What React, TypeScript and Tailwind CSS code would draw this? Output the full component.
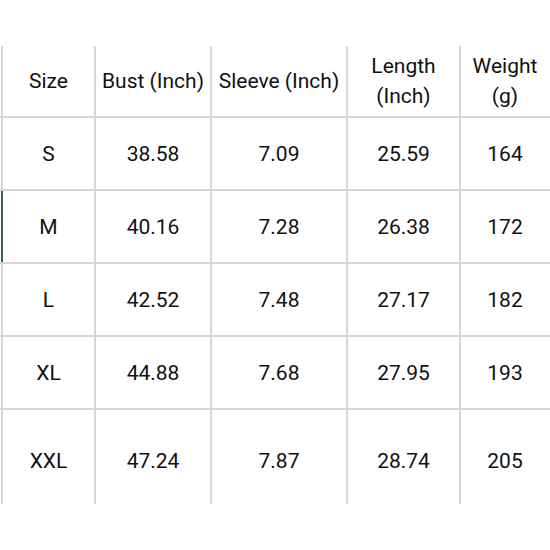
import React from 'react';

const rows = [
  { size: 'S', bust: '38.58', sleeve: '7.09', length: '25.59', weight: '164', h: 'h-[73px]' },
  { size: 'M', bust: '40.16', sleeve: '7.28', length: '26.38', weight: '172', h: 'h-[73px]', selected: true },
  { size: 'L', bust: '42.52', sleeve: '7.48', length: '27.17', weight: '182', h: 'h-[73px]' },
  { size: 'XL', bust: '44.88', sleeve: '7.68', length: '27.95', weight: '193', h: 'h-[73px]' },
  { size: 'XXL', bust: '47.24', sleeve: '7.87', length: '28.74', weight: '205', h: 'h-[96px]', pad: true },
];

const widths = ['w-[93px]', 'w-[116px]', 'w-[136px]', 'w-[113px]', 'w-[96px]'];

const Cell: React.FC<{ i: number; children: React.ReactNode; green?: boolean; pad?: 'head' | 'row' | 'big' }> = ({
  i,
  children,
  green,
  pad = 'head',
}) => (
  <div
    className={`${widths[i]} shrink-0 flex items-center justify-center text-center border-l-2 ${
      green && i === 0 ? 'border-l-[#2e6b45]' : 'border-l-[#d6d6d6]'
    }`}
  >
    <span
      className={`${i === 4 ? '-ml-[6px]' : ''} ${pad === 'big' ? 'pt-[10px]' : pad === 'row' ? 'pt-[3px]' : ''}`}
    >
      {children}
    </span>
  </div>
);

export default function App() {
  return (
    <div
      className="w-[550px] h-[550px] bg-white overflow-hidden text-[#111] text-[21px]"
      style={{ fontFamily: 'Roboto, "Noto Sans", sans-serif' }}
    >
      <div className="pt-[46px]">
        <div className="flex h-[70px] pl-[1px] leading-[30px]">
          <Cell i={0}>Size</Cell>
          <Cell i={1}>Bust (Inch)</Cell>
          <Cell i={2}>Sleeve (Inch)</Cell>
          <Cell i={3}>
            Length
            <br />
            (Inch)
          </Cell>
          <Cell i={4}>
            Weight
            <br />
            (g)
          </Cell>
        </div>
        {rows.map((r) => {
          const pad = r.pad ? 'big' : 'row';
          return (
            <div key={r.size} className={`flex ${r.h} w-[600px] pl-[1px] border-t-2 border-t-[#d6d6d6]`}>
              <Cell i={0} green={r.selected} pad={pad}>{r.size}</Cell>
              <Cell i={1} pad={pad}>{r.bust}</Cell>
              <Cell i={2} pad={pad}>{r.sleeve}</Cell>
              <Cell i={3} pad={pad}>{r.length}</Cell>
              <Cell i={4} pad={pad}>{r.weight}</Cell>
            </div>
          );
        })}
      </div>
    </div>
  );
}
